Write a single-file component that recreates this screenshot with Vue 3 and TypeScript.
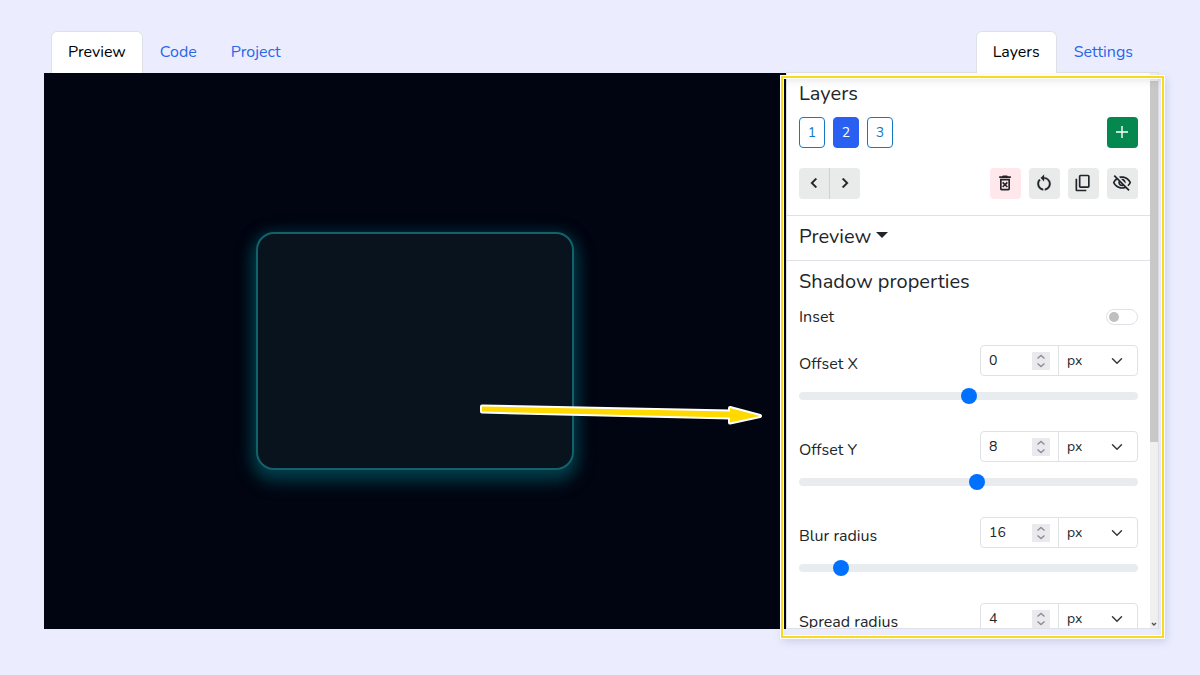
<script setup lang="ts">
import { reactive, ref } from 'vue'

interface Property {
  id: string
  label: string
  value: number
  min: number
  max: number
}

const layers = [1, 2, 3]
const activeLayer = ref(2)
const inset = ref(false)

const properties = reactive<Property[]>([
  { id: 'offset-x', label: 'Offset X', value: 0, min: -150, max: 150 },
  { id: 'offset-y', label: 'Offset Y', value: 8, min: -150, max: 150 },
  { id: 'blur', label: 'Blur radius', value: 16, min: 0, max: 150 },
  { id: 'spread', label: 'Spread radius', value: 4, min: -150, max: 150 },
])
</script>

<template>
  <main class="page">
    <section class="column stage-column">
      <nav class="tabs">
        <a href="#preview" class="tab active">Preview</a>
        <a href="#code" class="tab">Code</a>
        <a href="#project" class="tab">Project</a>
      </nav>
      <div class="stage">
        <div class="shape"></div>
        <svg class="pointer" width="288" height="26" viewBox="0 0 288 26" aria-hidden="true">
          <path d="M4 4.5 L252 9.5 V6 L282 14 L252 20.5 V15.5 L4 9.5 Z" fill="#ffd900" stroke="#fff" stroke-width="4" stroke-linejoin="round" />
          <path d="M4 4.5 L252 9.5 V6 L282 14 L252 20.5 V15.5 L4 9.5 Z" fill="#ffd900" />
        </svg>
      </div>
    </section>

    <section class="column side-column">
      <nav class="tabs end">
        <a href="#layers" class="tab active">Layers</a>
        <a href="#settings" class="tab">Settings</a>
      </nav>
      <div class="side">
        <div class="scroller">
          <div class="block layers">
            <h2>Layers</h2>
            <div class="row">
              <div class="group">
                <button
                  v-for="n in layers"
                  :key="n"
                  type="button"
                  class="layer"
                  :class="{ selected: n === activeLayer }"
                  @click="activeLayer = n"
                >{{ n }}</button>
              </div>
              <button type="button" class="icon add" aria-label="Add layer">
                <svg width="16" height="16" viewBox="0 0 16 16"><path d="M8 2v12M2 8h12" stroke="currentColor" stroke-width="1.4" fill="none" /></svg>
              </button>
            </div>
            <div class="row">
              <div class="move">
                <button type="button" class="icon" aria-label="Move left">
                  <svg width="20" height="20" viewBox="0 0 24 24"><path d="M15.41 7.41 14 6l-6 6 6 6 1.41-1.41L10.83 12z" fill="currentColor" stroke="currentColor" stroke-width=".4" /></svg>
                </button>
                <button type="button" class="icon" aria-label="Move right">
                  <svg width="20" height="20" viewBox="0 0 24 24"><path d="M8.59 16.59 13.17 12 8.59 7.41 10 6l6 6-6 6z" fill="currentColor" stroke="currentColor" stroke-width=".4" /></svg>
                </button>
              </div>
              <div class="group">
                <button type="button" class="icon danger" aria-label="Delete layer">
                  <svg width="20" height="20" viewBox="0 0 24 24"><path d="M14.12 10.47 12 12.59l-2.13-2.12-1.41 1.41L10.59 14l-2.12 2.12 1.41 1.41L12 15.41l2.12 2.12 1.41-1.41L13.41 14l2.12-2.12zM15.5 4l-1-1h-5l-1 1H5v2h14V4zM6 19c0 1.1.9 2 2 2h8c1.1 0 2-.9 2-2V7H6zM8 9h8v10H8z" fill="currentColor" /></svg>
                </button>
                <button type="button" class="icon" aria-label="Reset layer">
                  <svg width="20" height="20" viewBox="0 0 24 24"><path d="M12 5V2L8 6l4 4V7c3.31 0 6 2.69 6 6 0 2.97-2.17 5.43-5 5.91v2.02c3.95-.49 7-3.85 7-7.93 0-4.42-3.58-8-8-8zM6 13c0-1.65.67-3.15 1.76-4.24L6.34 7.34C4.9 8.79 4 10.79 4 13c0 4.08 3.05 7.44 7 7.93v-2.02c-2.83-.48-5-2.94-5-5.91z" fill="currentColor" stroke="currentColor" stroke-width=".3" /></svg>
                </button>
                <button type="button" class="icon" aria-label="Duplicate layer">
                  <svg width="20" height="20" viewBox="0 0 24 24"><path d="M18 2H9c-1.1 0-2 .9-2 2v12c0 1.1.9 2 2 2h9c1.1 0 2-.9 2-2V4c0-1.1-.9-2-2-2zm0 14H9V4h9zM3 7v13c0 1.1.9 2 2 2h11v-2H5V7z" fill="currentColor" /></svg>
                </button>
                <button type="button" class="icon" aria-label="Hide layer">
                  <svg width="20" height="20" viewBox="0 0 24 24"><path d="M12 6c3.79 0 7.17 2.13 8.82 5.5-.59 1.22-1.42 2.27-2.41 3.12l1.41 1.41c1.39-1.23 2.49-2.77 3.18-4.53C21.27 7.11 17 4 12 4c-1.27 0-2.49.2-3.64.57l1.65 1.65C10.66 6.09 11.32 6 12 6zm-1.07 1.14L13 9.21c.57.25 1.03.71 1.28 1.28l2.07 2.07c.08-.34.14-.7.14-1.07C16.5 9.01 14.48 7 12 7c-.37 0-.72.05-1.07.14zM2.01 3.87l2.68 2.68C3.06 7.83 1.77 9.53 1 11.5 2.73 15.89 7 19 12 19c1.52 0 2.98-.29 4.32-.82l3.42 3.42 1.41-1.41L3.42 2.45zm7.5 7.5 2.61 2.61c-.04.01-.08.02-.12.02-1.38 0-2.5-1.12-2.5-2.5 0-.05.01-.08.01-.13zm-3.4-3.4 1.75 1.75c-.23.55-.36 1.15-.36 1.78 0 2.48 2.02 4.5 4.5 4.5.63 0 1.23-.13 1.77-.36l.98.98c-.88.24-1.8.38-2.75.38-3.79 0-7.17-2.13-8.82-5.5.7-1.43 1.72-2.61 2.93-3.53z" fill="currentColor" /></svg>
                </button>
              </div>
            </div>
          </div>

          <div class="block fold">
            <h2>
              <button type="button" class="toggle">Preview <span class="caret"></span></button>
            </h2>
          </div>

          <div class="block">
            <h2>Shadow properties</h2>
            <div class="row inset">
              <label for="inset">Inset</label>
              <input id="inset" v-model="inset" type="checkbox" role="switch" class="switch" />
            </div>
            <div v-for="p in properties" :key="p.id" class="property">
              <div class="row bottom">
                <label :for="p.id">{{ p.label }}</label>
                <div class="field">
                  <span class="number">
                    <input :id="p.id" v-model.number="p.value" type="number" />
                    <svg class="spin" width="18" height="18" viewBox="0 0 18 18" aria-hidden="true"><path d="M5.5 6.5 9 3.5l3.5 3M5.5 11.5l3.5 3 3.5-3" fill="none" stroke="#8f8f98" stroke-width="1.5" /></svg>
                  </span>
                  <span class="unit">
                    <select :aria-label="p.label + ' unit'">
                      <option>px</option>
                      <option>em</option>
                      <option>rem</option>
                    </select>
                    <svg class="chevron" width="12" height="12" viewBox="0 0 16 16" aria-hidden="true"><path d="m2 5 6 6 6-6" fill="none" stroke="#343a40" stroke-width="2" stroke-linecap="round" stroke-linejoin="round" /></svg>
                  </span>
                </div>
              </div>
              <input v-model.number="p.value" type="range" class="range" :min="p.min" :max="p.max" :aria-label="p.label + ' slider'" />
            </div>
          </div>
        </div>
        <div class="scrollbar" aria-hidden="true">
          <div class="thumb"></div>
          <svg width="8" height="8" viewBox="0 0 8 8"><path d="m2 3 2 2 2-2" fill="none" stroke="#555" stroke-width="1.4" /></svg>
        </div>
      </div>
      <div class="highlight" aria-hidden="true"></div>
    </section>
  </main>
</template>

<style>
body {
  background: #ebedff;
}
</style>

<style scoped>
* {
  box-sizing: border-box;
}

.page {
  display: flex;
  height: 100vh;
  padding: 31px 41px 46px 44px;
  font: 16px/24px Nunito, "Open Sans", "Noto Sans", sans-serif;
  color: #212529;
}

.column {
  display: flex;
  flex-direction: column;
  min-width: 0;
  position: relative;
}

.stage-column {
  flex: 742 1 0;
}

.side-column {
  flex: 373 1 0;
}

.tabs {
  display: flex;
  flex: none;
  padding: 0 7px;
}

.tabs.end {
  justify-content: flex-end;
  padding: 0 9px;
  border-bottom: 1px solid #dee2e6;
  height: 42px;
}

.tab {
  padding: 8px 16px;
  border: 1px solid transparent;
  border-bottom: 0;
  border-radius: 6px 6px 0 0;
  color: #2a66e8;
  text-decoration: none;
  height: 42px;
}

.tab.active {
  background: #fff;
  border-color: #dee2e6;
  color: #000;
}

.stage {
  flex: 1;
  display: flex;
  align-items: center;
  justify-content: center;
  position: relative;
  background: #000511;
}

.shape {
  width: 318px;
  aspect-ratio: 4 / 3;
  border: 2px solid #11626a;
  border-radius: 18px;
  background: #08131d;
  box-shadow: 0 8px 16px 4px rgba(0, 90, 100, 0.6), 0 0 16px 2px rgba(0, 60, 85, 0.3);
}

.pointer {
  position: absolute;
  right: 20px;
  top: calc(50% + 51px);
}

.side {
  flex: 1;
  display: flex;
  min-height: 0;
  background: #fff;
  border: 1px solid #dee2e6;
  border-top: 0;
}

.scroller {
  flex: 1;
  min-width: 0;
  overflow-y: auto;
  scrollbar-width: none;
}

.block {
  padding: 8px 12px 0;
}

.block.layers {
  padding-bottom: 16px;
  border-bottom: 1px solid #dee2e6;
}

.block.fold {
  padding-bottom: 10px;
  border-bottom: 1px solid #dee2e6;
}

h2 {
  margin: 0;
  font-size: 20px;
  line-height: 26px;
  font-weight: 400;
}

.row {
  display: flex;
  justify-content: space-between;
  align-items: center;
}

.layers .row {
  margin-top: 10px;
}

.layers .row + .row {
  margin-top: 20px;
}

.group {
  display: flex;
  gap: 8px;
}

button {
  font: inherit;
  color: inherit;
  border: 0;
  padding: 0;
  background: none;
}

.layer {
  min-width: 26px;
  height: 31px;
  border: 1px solid #1478c8;
  border-radius: 4px;
  font-size: 14px;
  color: #1478c8;
}

.layer.selected {
  background: #2960f2;
  border-color: #2960f2;
  color: #fff;
}

.icon {
  display: flex;
  align-items: center;
  justify-content: center;
  width: 31px;
  height: 31px;
  padding: 0 1px 1px 0;
  border-radius: 4px;
  background: #e9eaea;
}

.icon.add {
  background: #05884f;
  color: #fff;
}

.icon.danger {
  background: #ffe8eb;
}

.move {
  display: flex;
}

.move .icon {
  padding-right: 0;
}

.move .icon:first-child {
  border-right: 1px solid #cfd1d2;
  border-radius: 4px 0 0 4px;
}

.move .icon:last-child {
  border-radius: 0 4px 4px 0;
  width: 30px;
}

.toggle {
  display: flex;
  align-items: center;
  gap: 5px;
}

.caret {
  border: 6px solid transparent;
  border-top-color: currentColor;
  border-bottom: 0;
  margin-bottom: 4px;
}

.inset {
  margin: 10px 0 16px;
}

.switch {
  appearance: none;
  display: flex;
  align-items: center;
  width: 32px;
  height: 16px;
  margin: 0;
  padding: 0 2px;
  border: 1px solid #dee2e6;
  border-radius: 8px;
  background: #fff;
}

.switch::before {
  content: "";
  width: 10px;
  height: 10px;
  border-radius: 50%;
  background: #bfbfbf;
}

.switch:checked {
  background: #0d6efd;
  justify-content: flex-end;
}

.property {
  padding-bottom: 23px;
}

.row.bottom {
  align-items: flex-end;
}

.field {
  display: flex;
  width: 158px;
  height: 31px;
  border: 1px solid #dee2e6;
  border-radius: 4px;
  background: #fff;
}

.number,
.unit {
  flex: none;
  width: 50%;
  display: flex;
  align-items: center;
}

.number {
  border-right: 1px solid #dee2e6;
  padding: 0 8px;
}

.unit {
  position: relative;
}

.field input,
.field select {
  appearance: none;
  flex: 1;
  min-width: 0;
  width: 100%;
  height: 100%;
  margin: 0;
  padding: 0;
  border: 0;
  border-radius: 4px;
  background: none;
  font: inherit;
  font-size: 14px;
  color: #212529;
}

.field input {
  appearance: textfield;
}

.field select {
  padding-left: 8px;
}

.spin {
  flex: none;
  background: #e9e9ee;
}

.chevron {
  position: absolute;
  right: 14px;
  pointer-events: none;
}

.range {
  appearance: none;
  display: block;
  width: 100%;
  height: 24px;
  margin: 8px 0 0;
  background: none;
}

.range::-webkit-slider-runnable-track {
  height: 8px;
  border-radius: 4px;
  background: #e9ecef;
}

.range::-webkit-slider-thumb {
  appearance: none;
  width: 16px;
  height: 16px;
  margin-top: -4px;
  border-radius: 50%;
  background: #0071ff;
}

.scrollbar {
  flex: none;
  display: flex;
  flex-direction: column;
  justify-content: space-between;
  width: 8px;
  padding-top: 8px;
  background: #f0f0f0;
}

.thumb {
  height: 66%;
  background: #c8c8c8;
}

.highlight {
  position: absolute;
  top: 44px;
  right: -6px;
  bottom: -10px;
  left: -6px;
  border: 1px solid #fff;
  outline: 2px solid #f8d91c;
  outline-offset: -3px;
  box-shadow: 2px 3px 8px rgba(60, 60, 110, 0.16), inset 0 4px 8px rgba(60, 60, 80, 0.14);
  pointer-events: none;
}

.highlight::before {
  content: "";
  position: absolute;
  inset: 2px;
  border: 1px solid #fff;
}
</style>
